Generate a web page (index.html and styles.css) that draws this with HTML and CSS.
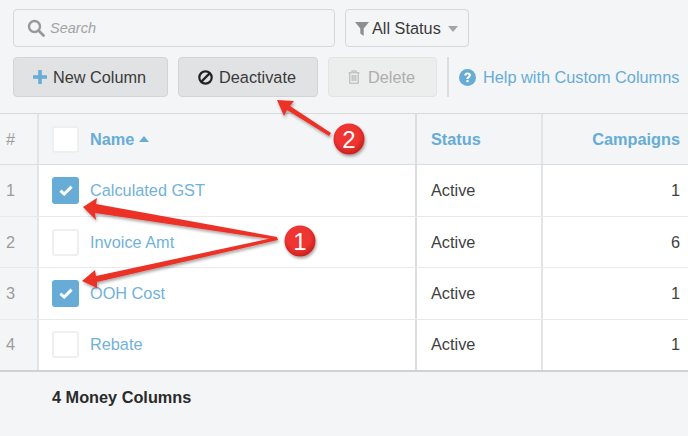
FILE: index.html
```html
<!DOCTYPE html>
<html lang="en">
<head>
<meta charset="utf-8">
<title>Money Columns</title>
<link rel="stylesheet" href="styles.css">
</head>
<body>
<div class="page">
  <div class="toolbar">
    <div class="filters">
      <div class="search">
        <svg class="search-icon" viewBox="0 0 18 18" width="18" height="18"><circle cx="7.5" cy="7.5" r="5.5" fill="none" stroke="#999" stroke-width="2.4"/><path d="M11.5 11.5l5 5" stroke="#999" stroke-width="2.8" stroke-linecap="round"/></svg>
        <span class="placeholder">Search</span>
      </div>
      <div class="status-select">
        <svg viewBox="0 0 14 15" width="14" height="15"><path d="M0 1h14L8.7 7.6V15l-3.4-2.6V7.6z" fill="#8e8e8e"/></svg>
        <span>All Status</span>
        <i class="caret"></i>
      </div>
    </div>
    <div class="actions">
      <div class="btn btn-new">
        <svg viewBox="0 0 14 14" width="14" height="14"><path d="M5.2 0h3.6v5.2H14v3.6H8.8V14H5.2V8.8H0V5.2h5.2z" fill="#66acd6"/></svg>
        <span>New Column</span>
      </div>
      <div class="btn btn-deactivate">
        <svg viewBox="0 0 15 15" width="15" height="15"><circle cx="7.5" cy="7.5" r="6.2" fill="none" stroke="#222" stroke-width="2.2"/><path d="M3.4 11.6l8.2-8.2" stroke="#222" stroke-width="2.2"/></svg>
        <span>Deactivate</span>
      </div>
      <div class="btn btn-delete">
        <svg viewBox="0 0 12 14" width="12" height="14"><path d="M4 2V1h4v1M.5 2.8h11M1.8 2.8v10.4h8.4V2.8M4.2 5v6M6 5v6M7.800 5v6" fill="none" stroke="#b5b5b5" stroke-width="1.1"/></svg>
        <span>Delete</span>
      </div>
      <div class="divider"></div>
      <div class="help">
        <svg viewBox="0 0 17 17" width="17" height="17"><circle cx="8.500" cy="8.500" r="8.500" fill="#66acd6"/><path d="M5.300 6.400c0-1.900 1.400-3 3.300-3s3.300 1 3.300 2.800c0 2.200-2.300 2.200-2.300 3.900H7.400c0-2.600 2.200-2.600 2.200-3.900 0-.6-.4-.9-1.100-.9s-1.100.4-1.100 1.100z" fill="#fff"/><rect x="7.400" y="11" width="2.200" height="2.200" fill="#fff"/></svg>
        <span>Help with Custom Columns</span>
      </div>
    </div>
  </div>

  <div class="table">
    <div class="row head">
      <div class="cell idx">#</div>
      <div class="cell name"><i class="box"></i><span class="name-head">Name</span><i class="sort"></i></div>
      <div class="cell status">Status</div>
      <div class="cell count">Campaigns</div>
    </div>
    <div class="row tall">
      <div class="cell idx">1</div>
      <div class="cell name"><i class="box on"><svg viewBox="0 0 14 11" width="14" height="11"><path d="M1.400 5.600l3.800 3.400 7.400-7.400" fill="none" stroke="#fff" stroke-width="3"/></svg></i><span class="link">Calculated GST</span></div>
      <div class="cell status">Active</div>
      <div class="cell count">1</div>
    </div>
    <div class="row">
      <div class="cell idx">2</div>
      <div class="cell name"><i class="box"></i><span class="link">Invoice Amt</span></div>
      <div class="cell status">Active</div>
      <div class="cell count">6</div>
    </div>
    <div class="row tall">
      <div class="cell idx">3</div>
      <div class="cell name"><i class="box on"><svg viewBox="0 0 14 11" width="14" height="11"><path d="M1.400 5.600l3.800 3.400 7.400-7.400" fill="none" stroke="#fff" stroke-width="3"/></svg></i><span class="link">OOH Cost</span></div>
      <div class="cell status">Active</div>
      <div class="cell count">1</div>
    </div>
    <div class="row last">
      <div class="cell idx">4</div>
      <div class="cell name"><i class="box"></i><span class="link">Rebate</span></div>
      <div class="cell status">Active</div>
      <div class="cell count">1</div>
    </div>
  </div>

  <div class="footer">4 Money Columns</div>

  <svg class="annotations" viewBox="0 0 688 436" width="688" height="436">
    <defs>
      <filter id="soft" x="-30%" y="-30%" width="160%" height="160%"><feDropShadow dx="1" dy="2" stdDeviation="1.500" flood-color="#000" flood-opacity=".35"/></filter>
      <radialGradient id="ball" cx=".45" cy=".4" r=".62"><stop offset=".6" stop-color="#ee3430"/><stop offset="1" stop-color="#c4201d"/></radialGradient>
    </defs>
    <g filter="url(#soft)" fill="#ec3228">
      <path d="M83 207l14-9-1 6 181 33 0 3-182-27 1 7z"/>
      <path d="M82 281l13-11 1 6 181-39 1 3-181 42 0 6z"/>
      <path d="M277 100l17 1-4 5 41 27-2 3-42-26-3 6z"/>
      <circle cx="300" cy="241" r="15.500" fill="url(#ball)"/>
      <circle cx="349" cy="139" r="15.500" fill="url(#ball)"/>
    </g>
    <text class="badge" x="300" y="249.500" text-anchor="middle">1</text>
    <text class="badge" x="349" y="147.500" text-anchor="middle">2</text>
  </svg>
</div>
</body>
</html>
```
FILE: styles.css
```css
* { box-sizing: border-box; }
html, body { margin: 0; padding: 0; }
body {
  width: 688px;
  height: 436px;
  overflow: hidden;
  background: #f4f5f7;
  font-family: "Liberation Sans", Arial, sans-serif;
  font-size: 16.300px;
  color: #3f3f3f;
}
.page { position: relative; width: 688px; height: 436px; overflow: hidden; }
.toolbar { height: 113px; padding: 9px 0 0 13px; }
.filters { display: flex; gap: 10px; height: 38px; }
.search {
  width: 322px;
  border: 1px solid #d5d6d8;
  border-radius: 4px;
  display: flex;
  align-items: center;
  gap: 5px;
  padding-left: 13px;
}
.search-icon { flex: none; }
.placeholder { font-style: italic; font-size: 14.500px; color: #a3a3a3; }
.status-select {
  width: 124px;
  border: 1px solid #d5d6d8;
  border-radius: 4px;
  display: flex;
  align-items: center;
  padding-left: 9px;
  color: #3b3b3b;
}
.status-select span { margin-left: 3px; }
.caret {
  margin-left: 7px;
  border-left: 5.500px solid transparent;
  border-right: 5.500px solid transparent;
  border-top: 6px solid #a5a5a5;
  margin-top: 2px;
}
.actions { display: flex; align-items: stretch; height: 40px; margin-top: 10px; }
.btn {
  display: flex;
  align-items: center;
  justify-content: center;
  gap: 6px;
  padding-right: 2px;
  border: 1px solid #d3d4d6;
  border-radius: 4px;
  background: #e1e2e4;
  color: #3a3a3a;
}
.btn-new { width: 155px; margin-right: 10px; }
.btn-deactivate { width: 140px; margin-right: 10px; }
.btn-delete { width: 109px; background: #eceded; border-color: #e2e3e4; color: #aeaeae; gap: 8px; }
.divider { width: 2px; background: #dcdddf; margin-left: 10px; }
.help { display: flex; align-items: center; gap: 7px; margin-left: 10px; color: #66acd6; white-space: nowrap; }
.table { border-top: 1px solid #d8d9db; border-bottom: 2px solid #d0d1d3; }
.row {
  display: grid;
  grid-template-columns: 39px 378px 126px 145px;
  height: 51px;
  background: #fff;
  border-bottom: 1px solid #e8e9ea;
}
.row.tall { height: 52px; }
.row.last { border-bottom: 0; height: 50px; }
.row.last .cell { padding-bottom: 1px; }
.row.head { height: 51px; background: #f4f5f7; border-bottom: 1px solid #dcdddf; font-weight: 700; color: #66acd6; }
.cell { display: flex; align-items: center; }
.idx { background: #f4f5f7; border-right: 2px solid #e3e4e6; padding-left: 6px; color: #9c9c9c; font-weight: 400; }
.name { border-right: 2px solid #dcdddf; padding-left: 13px; }
.status { border-right: 2px solid #e3e4e6; padding-left: 14px; }
.count { justify-content: flex-end; padding-right: 8px; }
.box {
  width: 27px;
  height: 27px;
  flex: none;
  border: 2px solid #eeeff0;
  border-radius: 3px;
  background: #fff;
  margin-right: 11px;
  display: flex;
  align-items: center;
  justify-content: center;
}
.box.on { background: #66acd6; border-color: #66acd6; }
.link { color: #72b2d9; }
.sort {
  margin-left: 5px;
  border-left: 5.500px solid transparent;
  border-right: 5.500px solid transparent;
  border-bottom: 6px solid #66acd6;
}
.footer { padding: 16px 0 0 52px; font-weight: 700; color: #2b2b2b; }
.annotations { position: absolute; left: 0; top: 0; pointer-events: none; }
.badge { font-family: "Liberation Sans", Arial, sans-serif; font-size: 24px; fill: #fff; }
```
